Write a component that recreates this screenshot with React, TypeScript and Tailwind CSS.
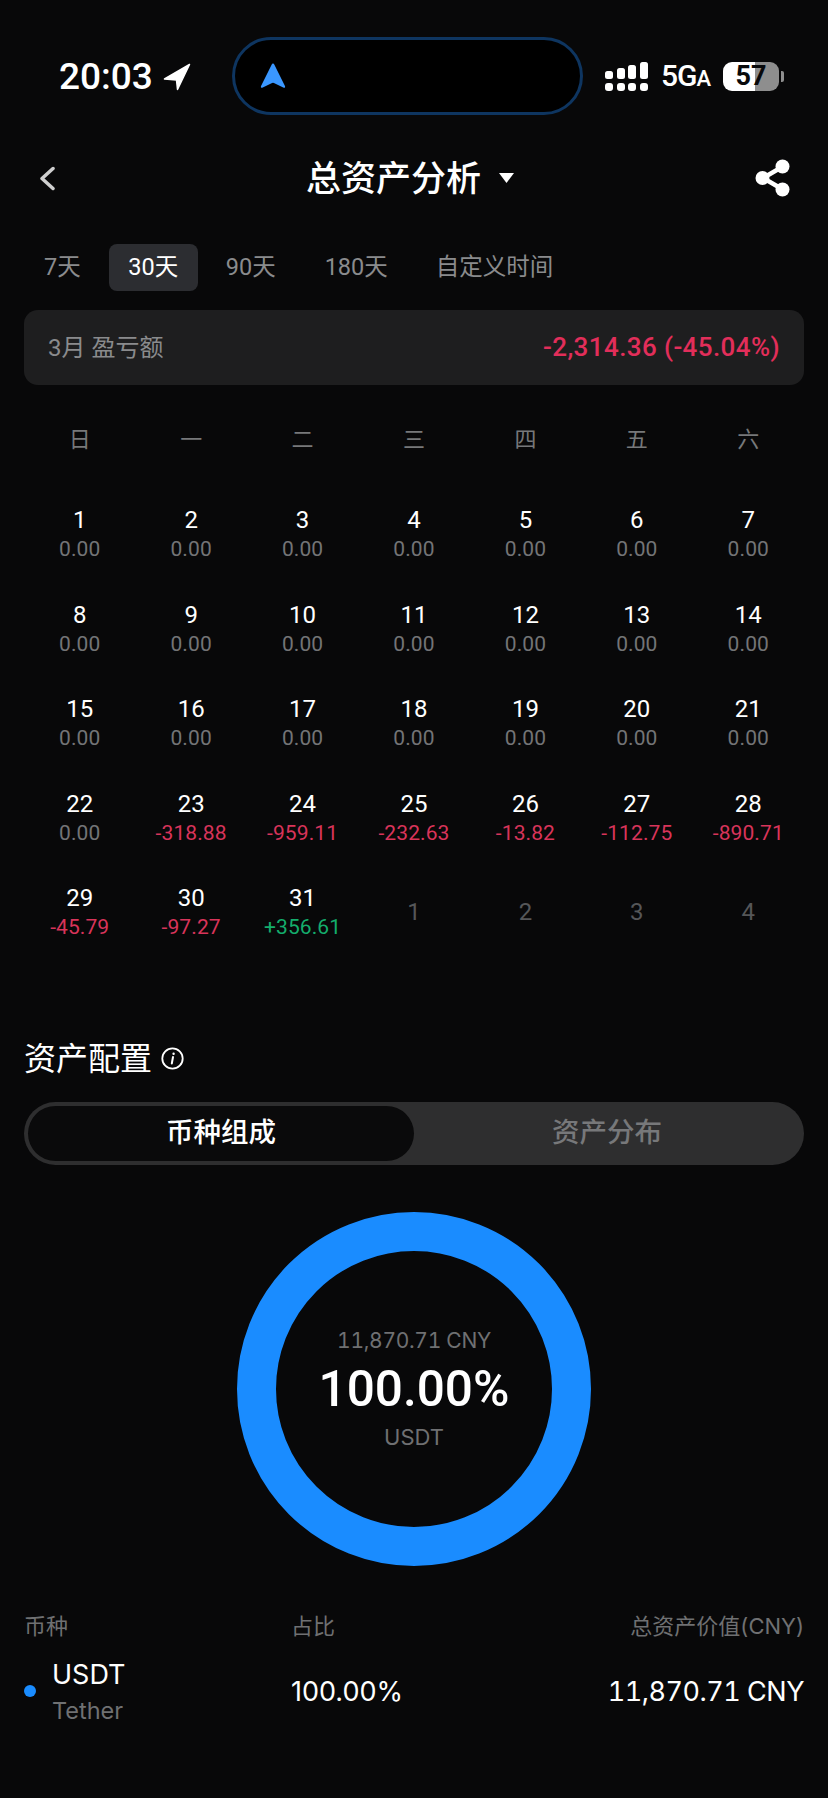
const F = { fontFamily: '"Inter","Noto Sans CJK SC",sans-serif' };

type Cell = { d: number; v?: string; t?: 'z' | 'r' | 'g' | 'n' };

const zeros = Array.from({ length: 22 }, (_, i) => ({ d: i + 1, v: '0.00', t: 'z' as const }));
const cells: Cell[] = [
  ...zeros,
  { d: 23, v: '-318.88', t: 'r' },
  { d: 24, v: '-959.11', t: 'r' },
  { d: 25, v: '-232.63', t: 'r' },
  { d: 26, v: '-13.82', t: 'r' },
  { d: 27, v: '-112.75', t: 'r' },
  { d: 28, v: '-890.71', t: 'r' },
  { d: 29, v: '-45.79', t: 'r' },
  { d: 30, v: '-97.27', t: 'r' },
  { d: 31, v: '+356.61', t: 'g' },
  { d: 1, t: 'n' },
  { d: 2, t: 'n' },
  { d: 3, t: 'n' },
  { d: 4, t: 'n' },
];

function DayCell({ c }: { c: Cell }) {
  if (c.t === 'n') {
    return (
      <div className="flex h-[94.5px] items-start justify-center pt-[32px] font-['Roboto'] text-[24px] leading-[30px] text-[#555658]">
        <span>{c.d}</span>
      </div>
    );
  }
  return (
    <div className="flex h-[94.5px] flex-col items-center font-['Roboto']">
      <div className="mt-[18px] text-[24px] leading-[30px] text-white">{c.d}</div>
      <div
        className={
          'text-[21px] leading-[28px] tracking-[0.1px] ' +
          (c.t === 'r' ? 'text-[#d8345a]' : c.t === 'g' ? 'text-[#14ad6c]' : 'text-[#737476]')
        }
      >
        {c.v}
      </div>
    </div>
  );
}

function Signal() {
  const cols = [
    { x: 0, y: 9 },
    { x: 12, y: 6 },
    { x: 23, y: 3 },
    { x: 35, y: 0 },
  ];
  return (
    <svg width="44" height="29" viewBox="0 0 44 29" fill="#fff">
      {cols.map((c) => (
        <g key={c.x}>
          <rect x={c.x} y={c.y} width="8" height={17 - c.y} rx="2.5" />
          <rect x={c.x} y="21" width="8" height="8" rx="3" />
        </g>
      ))}
    </svg>
  );
}

export default function App() {
  return (
    <div style={F} className="flex h-[1798px] w-[828px] flex-col overflow-hidden bg-[#080809] text-white">
      {/* status bar */}
      <div className="mt-[37px] flex h-[78px] items-center pl-[59px]">
        <span className="w-[104px] font-['Roboto'] text-[37px] font-medium leading-none">20:03</span>
        <svg width="28" height="28" viewBox="0 0 28 28" className="mt-[1px]" fill="#fff" stroke="#fff" strokeWidth="1.500" strokeLinejoin="round">
          <path d="M26.500 1.500 L1.500 16 L13.500 17 L14.500 26.500 Z" />
        </svg>
        <div className="ml-[41px] flex h-[78px] w-[351px] items-center rounded-[39px] border-[3px] border-[#0e3560] bg-black pl-[25px]">
          <svg width="26" height="28" viewBox="0 0 28 28" fill="#3a97ff">
            <path d="M14 0.500 Q15 0.500 15.500 2 L27 25 Q27.500 27.500 25 26.500 L15 21.500 Q14 21 13 21.500 L3 26.500 Q0.500 27.500 1 25 L12.500 2 Q13 0.500 14 0.500 Z" />
          </svg>
        </div>
        <div className="ml-[22px]">
          <Signal />
        </div>
        <div className="ml-[12px] flex w-[50px] items-baseline font-['Roboto'] font-medium leading-none">
          <span className="text-[30px] tracking-[-1px]">5G</span>
          <span className="text-[22px]">A</span>
        </div>
        <div className="ml-[12px] flex h-[29px] w-[56px] items-center justify-center rounded-[9px] bg-[linear-gradient(90deg,#ffffff_0,#ffffff_58%,#8e8e8e_58%)] font-['Roboto'] text-[27px] font-bold leading-none text-[#08090b]">
          57
        </div>
        <div className="ml-[2px] h-[11px] w-[3px] rounded-r-[2px] bg-[#8e8e8e]" />
      </div>

      {/* header */}
      <div className="mt-[40px] flex h-[46px] items-center pl-[39px]">
        <svg width="16" height="25" viewBox="0 0 16 25" fill="none" stroke="#cfcfcf" strokeWidth="3.500" strokeLinecap="round" strokeLinejoin="round">
          <path d="M14 2.500 L3 12.500 L14 22.500" />
        </svg>
        <span className="ml-[251px] w-[193px] whitespace-nowrap text-[35px] font-medium leading-none">总资产分析</span>
        <svg width="15" height="10" viewBox="0 0 15 10" fill="#fff">
          <path d="M0 0 H15 L7.500 10 Z" />
        </svg>
        <svg width="36" height="38" viewBox="0 0 36 38" className="ml-[241px]" fill="#fff" stroke="#fff">
          <path d="M27 8 L8 19 L27 30" fill="none" strokeWidth="4.500" />
          <circle cx="27.500" cy="7.500" r="7" stroke="none" />
          <circle cx="7.500" cy="19" r="7" stroke="none" />
          <circle cx="27.500" cy="30.500" r="7" stroke="none" />
        </svg>
      </div>

      {/* tabs */}
      <div className="mt-[43px] flex h-[47px] items-center font-['Roboto','Noto_Sans_CJK_SC',sans-serif] text-[23.5px] leading-none text-[#8a8b8d]">
        <span className="ml-[44px]">7天</span>
        <span className="ml-[28px] flex h-[47px] w-[89px] items-center justify-center rounded-[8px] bg-[#2c2d31] text-white">30天</span>
        <span className="ml-[28px]">90天</span>
        <span className="ml-[49px]">180天</span>
        <span className="ml-[48px]">自定义时间</span>
      </div>

      {/* summary */}
      <div className="mx-[24px] mt-[19px] flex h-[75px] items-center justify-between rounded-[14px] bg-[#1e1e1f] px-[24px] font-['Roboto','Noto_Sans_CJK_SC',sans-serif] text-[24px]">
        <span className="text-[#8a8b8d]">3月 盈亏额</span>
        <span className="text-[26px] font-medium tracking-[0.4px] text-[#e22e5a]">-2,314.36 (-45.04%)</span>
      </div>

      {/* weekdays */}
      <div className="mx-[24px] mt-[35px] grid h-[38px] grid-cols-7 items-center text-center text-[22px] text-[#77787a]">
        {['日', '一', '二', '三', '四', '五', '六'].map((w) => (
          <span key={w}>{w}</span>
        ))}
      </div>

      {/* calendar */}
      <div className="mx-[24px] mt-[29px] grid grid-cols-7">
        {cells.map((c, i) => (
          <DayCell key={i} c={c} />
        ))}
      </div>

      {/* section */}
      <div className="mx-[24px] mt-[79px] flex h-[40px] items-center">
        <span className="text-[32px] leading-none">资产配置</span>
        <svg width="23" height="23" viewBox="0 0 23 23" className="ml-[9px]" fill="none" stroke="#fff" strokeWidth="1.800">
          <circle cx="11.500" cy="11.500" r="10.200" />
          <path d="M12 10 L10.800 16.500" strokeLinecap="round" strokeWidth="2" />
          <circle cx="12.600" cy="6.800" r="1.200" fill="#fff" stroke="none" />
        </svg>
      </div>

      {/* segmented */}
      <div className="mx-[24px] mt-[23px] flex h-[63px] rounded-[32px] bg-[#2e2e2f] p-[4px] text-[27.5px] font-medium leading-none">
        <div className="flex w-[386px] items-center justify-center rounded-[28px] bg-[#0a0a0b] text-white">币种组成</div>
        <div className="flex flex-1 items-center justify-center text-[#77787a]">资产分布</div>
      </div>

      {/* donut */}
      <div className="mx-auto mt-[47px] flex h-[354px] w-[354px] shrink-0 flex-col items-center rounded-full border-[39px] border-[#1a8cff]">
        <div className="mt-[76px] text-[21px] leading-[28px] tracking-[-0.3px] tabular-nums text-[#6f7072]">11,870.71 CNY</div>
        <div className="mt-[4px] font-['Roboto'] text-[49.5px] font-medium leading-[60px] text-white">100.00%</div>
        <div className="mt-[4px] text-[22px] leading-[28px] text-[#6f7072]">USDT</div>
      </div>

      {/* table */}
      <div className="mx-[24px] mt-[45px] grid h-[30px] grid-cols-[267px_1fr_auto] items-center text-[22px] leading-none text-[#6f7072]">
        <span>币种</span>
        <span>占比</span>
        <span>总资产价值(CNY)</span>
      </div>
      <div className="mx-[24px] mt-[13px] grid grid-cols-[267px_1fr_auto] items-center text-[27px] leading-none">
        <div className="flex items-center">
          <span className="h-[12px] w-[12px] rounded-full bg-[#1a8cff]" />
          <div className="ml-[16px] flex flex-col pt-[3px]">
            <span className="leading-[36px]">USDT</span>
            <span className="text-[23.5px] leading-[36px] text-[#6f7072]">Tether</span>
          </div>
        </div>
        <span>100.00%</span>
        <span className="tabular-nums tracking-[-0.5px]">11,870.71 CNY</span>
      </div>
    </div>
  );
}
